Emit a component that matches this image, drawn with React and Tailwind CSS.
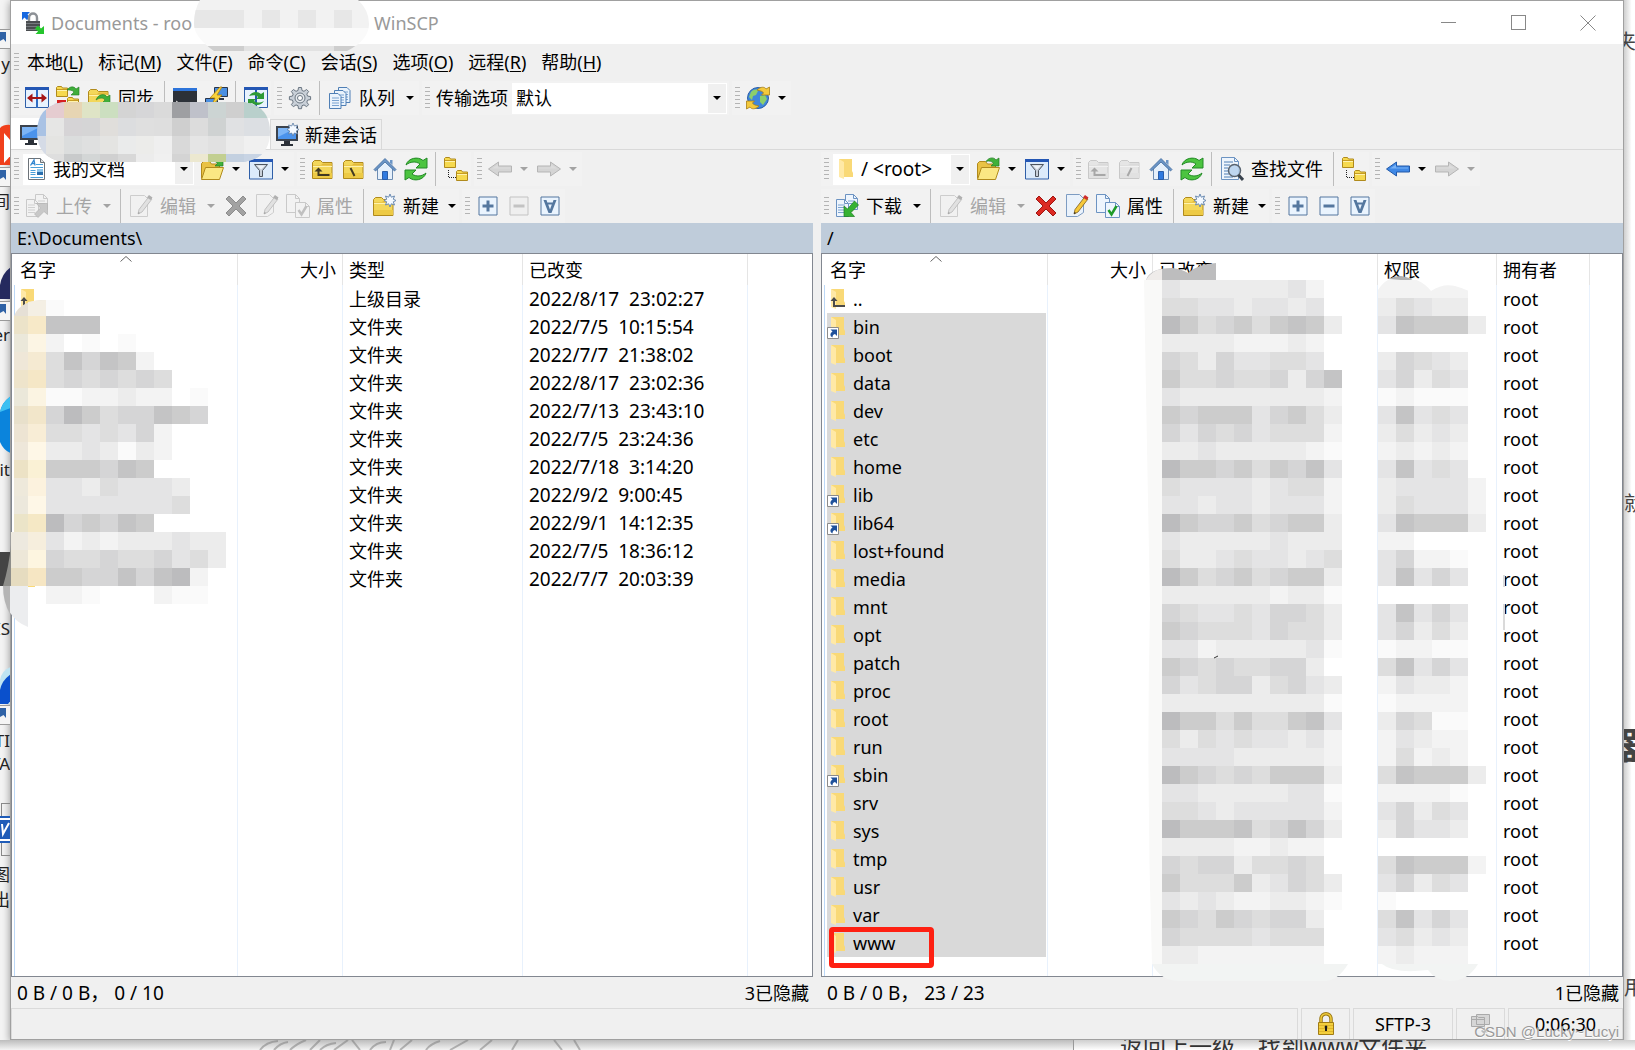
import { useState } from 'react';

const MENUS = [
    ['本地', 'L'], ['标记', 'M'], ['文件', 'F'], ['命令', 'C'],
    ['会话', 'S'], ['选项', 'O'], ['远程', 'R'], ['帮助', 'H']
];

const LOCAL_ROWS = [
    ['上级目录', '2022/8/17  23:02:27'],
    ['文件夹', '2022/7/5  10:15:54'],
    ['文件夹', '2022/7/7  21:38:02'],
    ['文件夹', '2022/8/17  23:02:36'],
    ['文件夹', '2022/7/13  23:43:10'],
    ['文件夹', '2022/7/5  23:24:36'],
    ['文件夹', '2022/7/18  3:14:20'],
    ['文件夹', '2022/9/2  9:00:45'],
    ['文件夹', '2022/9/1  14:12:35'],
    ['文件夹', '2022/7/5  18:36:12'],
    ['文件夹', '2022/7/7  20:03:39']
];

const REMOTE_ROWS = [
    '..', 'bin', 'boot', 'data', 'dev', 'etc', 'home', 'lib', 'lib64', 'lost+found', 'media', 'mnt',
    'opt', 'patch', 'proc', 'root', 'run', 'sbin', 'srv', 'sys', 'tmp', 'usr', 'var', 'www'
];
const LINKS = ['bin', 'lib', 'lib64', 'sbin'];

// one character per mosaic block, 0 = nothing, 9 = darkest
const SHADES = ['none', '#fafafa', '#f3f3f3', '#ececec', '#e4e4e5', '#dddddd', '#d5d5d6', '#cccccc', '#c4c4c5', '#bcbcbe'];

const MASK_LOCAL = [
    '888', '20101', '586872', '5656565', '112232201', '697566876', '5545462', '3343132', '777687',
    '44354443', '44444445', '967687', '4232333433', '6556556453', '776686892', '2210002110'
];
const MASK_DATE = [
    '4333333420', '5544344340', '9756757873', '3333222320', '6536445540', '7556556368', '4333333332',
    '7677746753', '6465645552', '3343333321', '9776757684', '5444434552', '4434434442', '9766756773',
    '4333334333', '5334544345', '9756756773', '3333332331', '6544546653', '7655546553', '4423333341',
    '7656556630', '6456635643', '3333333331', '9775755784', '5354544342', '4444333332', '9765657773',
    '4433333441', '5543444442', '9777856863', '3333223220', '6566355650', '7555734653', '4343223321',
    '7657656630', '6555545550', '3322222220'
];
const MASK_RIGHTS = [
    '222220', '354330', '487773', '', '36543', '46354', '12111', '48454', '35343', '23232', '48454',
    '344442', '354442', '487773', '22', '46221', '48464', '', '48464', '46353', '12211', '58464',
    '24332', '12222', '36511', '24322', '25232', '587773', '22221', '46354', '36443', '', '587772',
    '46354', '1', '58464', '45343', '23222'
];
const FOLDER_TINTS = [
    ['#ece3c9', '#f7e9c8'], ['#ebe8da', '#fcf5e4'], ['#efe7d8', '#f5ead2'], ['#eee4cb', '#f5e7c6'],
    ['#ebe8da', '#fbf4e2'], ['#e8e0cb', '#f2e6ca'], ['#ede4d3', '#f8edd6'], ['#eee7da', '#fef7e7'],
    ['#ece2c5', '#faf1d5'], ['#eee9db', '#fcf2de'], ['#ece8dc', '#fef7e7'], ['#ebe4c8', '#f5e8c5'],
    ['#ede9df', '#f6eedd'], ['#ede7d8', '#fdf5e0'], ['#e6dcc0', '#f6e6c3']
];
const MASK_SESSION = [
    ['#a9c2e4', '#e5ccd0', '#e7d5b3', '#dfe4c6', '#ccdfc0', '#d4d4d4', '#d6d6d8', '#dadada', '#9e9fa2', '#bfc1ca', '#ccd4d3', '#cfcfcf', '#b9d0cc'],
    ['#a9c2e4', '#e6e6e5', '#d6d4d6', '#d5d5d6', '#e0dedb', '#dcdddf', '#dfdfdf', '#dedede', '#cfcfcf', '#dcdcdc', '#cfd2d2', '#e0e1e3', '#dcdfe3'],
    ['#d5dbe6', '#e4e4e2', '#dbdddd', '#dfe0e0', '#e4e4e2', '#eaebeb', '#ececea', '#efefef', '#d9d9d9', '#e5e5e5', '#e1e1e1', '#ebebeb', '#f0f0f0'],
    ['#c9c7c8', '#dedede', '#c8cacb', '#d3d6d6', '#d0d0d0', '#d8d8d8', '#ececec', '#f0f0f0', '#d4d4d4', '#ece8d0', '#c2cf91', '#c3d0e0', '#c8d4e4']
];

/* ---------- icons ---------- */

const Svg = ({ children, gray }) => (
    <svg width="24" height="24" viewBox="0 0 24 24" aria-hidden="true" className={gray ? 'shrink-0 grayscale opacity-40' : 'shrink-0'}>{children}</svg>
);

const SmallFolder = ({ x = 0, y = 0 }) => (
    <g transform={`translate(${x} ${y})`}>
        <path d="M.5 10.5v-9l1-1h4l1 1.5h5v8.5z" fill="#f6d94f" stroke="#b08a1c" />
        <path d="M1 4.5h10" stroke="#fff3ae" />
        <path d="M1 3.5h10" stroke="#c79c22" />
    </g>
);

const FolderShape = () => (
    <>
        <path d="M1.5 21.500v-16l2-2h6l2 2h9.500v16z" fill="#f3d75a" stroke="#b08a1c" />
        <path d="M2 8.500h19v-2h-9l-2 1.500H2z" fill="#e2b83a" />
        <path d="M2 9.500h19" stroke="#fff2ac" />
        <path d="M2 16h19v5H2z" fill="#edca45" />
    </>
);

const FolderUpIcon = ({ gray }) => (
    <Svg gray={gray}><FolderShape /><path d="M7.500 10.500l-4 4h3v4.500h12v-2h-10v-2.500h3z" fill="#413a22" /></Svg>
);

const FolderRootIcon = ({ gray, flip }) => (
    <Svg gray={gray}><FolderShape /><path d={flip ? 'M13.500 11l-4 8' : 'M8.500 11l4 8'} stroke="#413a22" strokeWidth="2" /></Svg>
);

const FolderOpenIcon = () => (
    <Svg>
        <path d="M1.500 21.500v-15l2-2h6l2 2.500h8v4" fill="#e9c244" stroke="#b08a1c" />
        <path d="M1.500 22.500l4-12h18l-4 12z" fill="#fae783" stroke="#b08a1c" />
        <path d="M10 4.500C13 0 18 0 20 3l3-2v8h-8l2.500-2.500C16 4 13 3.500 10 4.500z" fill="#3fb13a" stroke="#237d24" strokeWidth=".7" />
    </Svg>
);

const NewFolderIcon = () => (
    <Svg>
        <FolderShape />
        <path d="M18 0l1.300 3.200 3.200-1.200-1.200 3.200L24 6.500l-2.700 1.300 1.200 3.200-3.200-1.200L18 13l-1.300-3.200-3.200 1.200 1.200-3.200L12 6.500l2.700-1.300L13.500 2l3.200 1.200z" fill="#f4f9ff" stroke="#6b8bb3" />
    </Svg>
);

const FilterIcon = () => (
    <Svg>
        <path d="M.5 3h23v19H.5z" fill="#dcebfb" stroke="#2f5fa8" />
        <path d="M0 2h24v3H0z" fill="#2457b4" />
        <path d="M5.500 7.500h13l-5 6v6h-3v-6z" fill="#c8d0da" stroke="#4d555f" />
        <path d="M8 8.500h8l-4 4z" fill="#eef3f8" />
    </Svg>
);

const HomeIcon = () => (
    <Svg>
        <path d="M4.500 11v11.500h15V11L12 4z" fill="#e6f0fb" stroke="#6d8cb2" />
        <path d="M1 12.500L12 1.500l11 11-1.500 1.500L12 5l-9.500 9z" fill="#6b95c6" stroke="#3f6a9c" strokeWidth=".8" />
        <path d="M9.500 22.500v-8h5v8z" fill="#2f7ae0" stroke="#2a5eaa" />
        <path d="M17 3h2.500v5L17 5.500z" fill="#6b95c6" />
    </Svg>
);

const RefreshIcon = () => (
    <Svg>
        <path d="M2 8C4 1 14-1 19 3.500L23 1v10H12l4-4C12 4 6 4.500 2 8z" fill="#4cc440" stroke="#238a26" />
        <path d="M22 16c-2 7-12 9-17 4.500L1 23V13h11l-4 4c4 3 10 2.500 14-1z" fill="#4cc440" stroke="#238a26" />
    </Svg>
);

const TreeIcon = () => (
    <Svg>
        <SmallFolder x={0} y={0} />
        <SmallFolder x={12} y={13} />
        <path d="M4.500 13v7.500H12" fill="none" stroke="#222" strokeDasharray="1 1" />
    </Svg>
);

const ArrowIcon = ({ gray, right }) => (
    <Svg>
        <g transform={right ? 'matrix(-1 0 0 1 24 0)' : undefined}>
            <path d="M.500 12l10-7v4h13v6h-13v4z" fill={gray ? '#d4d4d4' : '#3f88e6'} stroke={gray ? '#b5b5b5' : '#2259a8'} />
            <path d="M4 11.500l6-4v3h12v1z" fill={gray ? '#dcdcdc' : '#79b2f5'} />
        </g>
    </Svg>
);

const CompareIcon = () => (
    <Svg>
        <path d="M.500 1.500h23v20H.500z" fill="#e8f2fd" stroke="#2f5fa8" />
        <path d="M0 1h24v3H0z" fill="#2457b4" />
        <path d="M11 4h2v18h-2z" fill="#2f6cc4" />
        <path d="M2 12l5.500-4.500V11h9V7.500L22 12l-5.500 4.500V13h-9v3.500z" fill="#a51616" />
    </Svg>
);

const SyncFolderIcon = () => (
    <Svg>
        <SmallFolder x={0} y={0} />
        <path d="M1 14h9v9H1z" fill="#d61f1f" />
        <SmallFolder x={11} y={11} />
        <path d="M11 4c3-4 7-4 9-1l3-2v8h-8l3-3c-2-2-4-2-7-2z" fill="#3fae3a" stroke="#237d24" strokeWidth=".6" />
    </Svg>
);

const FolderSyncIcon = () => (
    <Svg>
        <FolderShape />
        <path d="M9 14c2-6 9-7 11-3l3-2v8h-8l3-3c-2-3-6-2-9 0z" fill="#3fae3a" stroke="#237d24" strokeWidth=".6" />
    </Svg>
);

const TerminalIcon = () => (
    <Svg>
        <path d="M0 2h24v20H0z" fill="#2c3138" />
        <path d="M0 2h24v3H0z" fill="#2d74da" />
        <path d="M3 15l3 2-3 2M8 19h4" stroke="#e5e5e5" fill="none" />
    </Svg>
);

const PuttyIcon = () => (
    <Svg>
        <path d="M10.500 1.500h13v9h-13zM1.500 12.500h12v8h-12z" fill="#4a8fe2" stroke="#29354a" />
        <path d="M15 12h5v2h-5z" fill="#29354a" />
        <path d="M16 1L6 12h5l-4 9 11-12h-5l5-8z" fill="#f8d23c" stroke="#ae8411" strokeWidth=".8" />
    </Svg>
);

const SyncBrowseIcon = () => (
    <Svg>
        <path d="M.500 1.500h23v20H.500z" fill="#e8f2fd" stroke="#2f5fa8" />
        <path d="M0 1h24v3H0zM11 4h2v18h-2z" fill="#2457b4" />
        <path d="M5 10c3-5 9-5 12-2l3-2v7h-8l2-2c-2-2-5-2-9-1zM20 15c-3 5-9 5-12 2l-4 2v-6h8l-2 2c3 2 6 2 10 0z" fill="#2d9a35" />
    </Svg>
);

const GearIcon = () => (
    <Svg>
        <g fill="#c9d0d8" stroke="#6b7682">
            <path d="M10.500 1.500h3l.5 3 2 .8 2.600-1.800 2 2-1.800 2.600.8 2 3 .5v3l-3 .5-.8 2 1.800 2.600-2 2-2.600-1.800-2 .8-.5 3h-3l-.5-3-2-.8-2.600 1.800-2-2 1.800-2.600-.8-2-3-.5v-3l3-.5.8-2-1.800-2.600 2-2L8 5.300l2-.8z" />
            <circle cx="12" cy="12" r="5" fill="#e4e8ec" />
            <circle cx="12" cy="12" r="2.500" fill="#fff" />
        </g>
    </Svg>
);

const QueueIcon = () => (
    <Svg>
        {[[10, 1], [6, 4], [1, 7]].map(([x, y]) => (
            <g key={x} transform={`translate(${x} ${y})`}>
                <path d="M.5.5h8.500l3 3v12H.5z" fill="#eaf3fc" stroke="#4f7fb5" />
                <path d="M3 5h7M3 7.500h7M3 10h7M3 12.500h7" stroke="#7ba3d0" />
            </g>
        ))}
    </Svg>
);

const GlobeIcon = () => (
    <Svg>
        <circle cx="12" cy="12" r="10.500" fill="#3f86dc" stroke="#2a5ea8" />
        <path d="M5 6c3-3 6-3 7-1l-2 4-3 1-1 4-3-3zM14 10l5-1 2 4-4 6-3-3z" fill="#8ccf6b" />
        <path d="M11 4c4-4 8-3 9-1l3.500-2v8h-8l2-2c-1-2-3-2-6.500-3zM13 20c-4 4-8 3-9 1L.5 23v-8h8l-2 2c1 2 3 2 6.500 3z" fill="#f4c93c" stroke="#a87f12" strokeWidth=".8" />
    </Svg>
);

const MonitorIcon = ({ star }) => (
    <Svg>
        <path d="M1 3h22v15H1z" fill="#3c434d" />
        <path d="M3 5h18v11H3z" fill="#4b93ec" />
        <path d="M3 5h18L3 14z" fill="#7db5f6" />
        <path d="M9 18h6v3h3v2H6v-2h3z" fill="#2b3038" />
        {star && <path d="M18 0l1.300 3 3.200-1-1.200 3 2.700 1.500-2.700 1.500 1.200 3-3.200-1L18 13l-1.300-3-3.200 1 1.200-3L12 6.500 14.700 5l-1.200-3 3.200 1z" fill="#f4f9ff" stroke="#5b7ba3" strokeWidth=".8" />}
    </Svg>
);

const DocIcon = () => (
    <Svg>
        <path d="M3.500 1.500h12l4 4v17h-16z" fill="#fff" stroke="#6c7278" />
        <path d="M15.500 1.500v4h4" fill="#ddd" stroke="#6c7278" />
        <path d="M5.500 8.500L9 3l1 5.500M7 6.500h3" stroke="#2f86d0" strokeWidth="1.300" fill="none" />
        <path d="M11 7.500h7M5.500 10.500h12.500M5.500 13.500h5M5.500 15.500h5M5.500 17.500h5M5.500 20.500h12.500" stroke="#4a9fd8" />
        <path d="M12 12h6v6h-6z" fill="#8cc4ea" />
        <path d="M12 15h6v3h-6z" fill="#2b6fae" />
    </Svg>
);

const Page = ({ x = 0, y = 0, w = 12, h = 15 }) => (
    <g transform={`translate(${x} ${y})`}>
        <path d={`M.5.5h${w - 4}l4 4v${h - 4}h-${w}z`} fill="#eef5fd" stroke="#6c93c2" />
        <path d={`M${w - 3.500}.5v4h4`} fill="none" stroke="#6c93c2" />
    </g>
);

const TransferIcon = ({ gray, up }) => (
    <Svg gray={gray}>
        <Page x={10} y={0} />
        <Page x={1} y={5} h={17} />
        <path d="M3 11h7M3 13.500h7M3 16h7M3 18.500h7M13 7h7M13 9.500h7" stroke="#7ba3d0" />
        {up
            ? <path d="M22.500 9.500v11l-3.500-3-6 6-3.500-3.500 6-6-4-4.500z" fill="#8a8a8a" stroke="#555" strokeWidth=".7" />
            : <path d="M9 12l3.500 3 7-8 4 4-7.500 7.500 3.500 4H9z" fill="#35b233" stroke="#1c7d20" strokeWidth=".7" />}
    </Svg>
);

const EditIcon = ({ gray, plain }) => (
    <Svg gray={gray}>
        <path d={plain ? 'M1.500.500h13l4 4v14l-6 4h-11z' : 'M1.500 1.500h14l3 3v18h-17z'} fill="#eaf2fb" stroke="#7d9cc2" />
        <path d="M20 2.500l3 2.500-10 13-4 2 1-4.500z" fill="#f6c83a" stroke="#7c5c1c" strokeWidth=".8" />
        <path d="M20 1l3.500 2.500-2 2.500L18 3.500z" fill="#cf2b2b" />
        <path d="M9 20l.5-2 1.500 1z" fill="#222" />
    </Svg>
);

const PropsIcon = ({ gray }) => (
    <Svg gray={gray}>
        <Page x={0} y={0} w={13} h={18} />
        <Page x={9} y={8} w={14} h={15} />
        <path d="M12.500 16l3 4.500 5-8.500" fill="none" stroke="#1e9b28" strokeWidth="2.500" />
    </Svg>
);

const DeleteIcon = ({ gray }) => (
    <Svg>
        <path d="M5 2l7 7 7-7 3 3-7 7 7 7-3 3-7-7-7 7-3-3 7-7-7-7z" fill={gray ? '#a2a2a2' : '#dc2a22'} stroke={gray ? '#8c8c8c' : '#9f1410'} strokeLinejoin="round" />
    </Svg>
);

const FindIcon = () => (
    <Svg>
        <Page x={1} y={0} w={17} h={22} />
        <path d="M4 5h9M4 8h6M4 11h4M4 14h4M4 17h5M4 20h9" stroke="#4f7fb5" />
        <circle cx="14.500" cy="13.500" r="6" fill="#b8d3ee" fillOpacity=".9" stroke="#59636f" strokeWidth="1.500" />
        <path d="M18.500 18l4.500 5" stroke="#39424d" strokeWidth="3" />
    </Svg>
);

const MARKS = {
    plus: 'M10.500 6.500h3v4h4v3h-4v4h-3v-4h-4v-3h4z',
    minus: 'M6.500 10.500h11v3h-11z',
    invert: 'M5.500 6h3l.8 2.500h5.400l.8-2.500h3L13.500 19h-3zM10.200 10.500l1.800 5 1.800-5z'
};

const MarkIcon = ({ kind, gray }) => (
    <Svg>
        <path d="M3 3h18v18H3z" fill={gray ? '#efefef' : '#eaf4fe'} stroke={gray ? '#c3c3c3' : '#54779f'} />
        <path d={MARKS[kind]} fillRule="evenodd" fill={gray ? '#c3c3c3' : '#54779f'} />
    </Svg>
);

const AppIcon = () => (
    <svg width="24" height="24" viewBox="0 0 24 24" aria-hidden="true">
        <path d="M1 1h8L6.500 3.500 9 6 6 9 3.500 6.500 1 9z" fill="#1668e0" />
        <path d="M8 11V7c0-6 8-6 8 0v4" fill="none" stroke="#8d9196" strokeWidth="2.400" />
        <path d="M5 10h14v10H5z" fill="#4a4d50" />
        <path d="M5 12.500h14M5 15.500h14M5 18.500h14" stroke="#777b80" />
        <path d="M23 23h-8.500l2.500-2.500-3-3 3-3 3 3 3-2.500z" fill="#25c52d" />
    </svg>
);

const Caret = ({ gray }) => (
    <svg width="8" height="4" viewBox="0 0 8 4" aria-hidden="true"><path d="M0 0h8L4 4z" fill={gray ? '#a3a3a3' : '#000'} /></svg>
);

const FileIcon = ({ up, link }) => (
    <svg width="18" height="28" viewBox="0 0 18 28" aria-hidden="true" className="shrink-0">
        <path d="M4 4h13v12l1 2v4H8z" fill="#f9d977" />
        <path d="M4 4l5 3v17l-5-2z" fill="#ffe9a6" />
        {up && <path d="M7 12l-3.500 4H6v6h12v-2H8v-4h2.500z" fill="#4b4b4b" />}
        {link && (
            <>
                <path d="M.5 14.500h11v11H.5z" fill="#fff" stroke="#8b8b8b" />
                <path d="M3.500 16.500h6.500v6.500l-2-2c-2 .5-2.500 1.500-2.500 3.500-3-1.500-2.500-4.500 0-6z" fill="#1f519b" />
            </>
        )}
    </svg>
);

const LockIcon = () => (
    <svg width="18" height="24" viewBox="0 0 18 24" aria-hidden="true">
        <path d="M4 11V7c0-7 10-7 10 0v4" fill="none" stroke="#9c7a16" strokeWidth="3.500" />
        <path d="M4 11V7c0-7 10-7 10 0v4" fill="none" stroke="#f1cd3c" strokeWidth="1.500" />
        <path d="M1.500 10.500h15v12h-15z" fill="#f3cf3d" stroke="#a17c15" />
        <path d="M2 13.500h14M2 16.500h14M2 19.500h14" stroke="#e0b52c" />
        <path d="M9 13.500a1.500 1.500 0 0 1 1 2.500v3H8v-3a1.500 1.500 0 0 1 1-2.500z" fill="#1b1b1b" />
    </svg>
);

/* ---------- toolbar parts ---------- */

const Grip = ({ short }) => (
    <span className={`ml-[3px] mr-[2px] w-[5px] shrink-0 bg-[repeating-linear-gradient(to_bottom,#b4b4b4_0_1px,transparent_1px_4px)] ${short ? 'h-[17px]' : 'h-[22px]'}`} />
);

const Band = ({ children, short }) => (
    <div className="mr-[3px] flex h-[34px] shrink-0 items-center bg-[#f2f2f2]">
        <Grip short={short} />
        {children}
    </div>
);

const Sep = () => <span className="mx-1 h-[34px] w-px shrink-0 bg-[#bdbdbd]" />;

const Tool = ({ icon, label, title, gray }) => (
    <button type="button" disabled={gray} title={title || label} aria-label={title || label} className={`flex h-[30px] shrink-0 items-center ${gray ? 'text-[#a5a5a5]' : 'text-black'}`}>
        <span className="flex w-[31px] justify-center">{icon}</span>
        {label && <span className="pl-1 pr-1.5">{label}</span>}
    </button>
);

const Drop = ({ gray, title, tight }) => (
    <button type="button" disabled={gray} aria-label={title} className={`flex h-[30px] shrink-0 items-center justify-center ${tight ? 'w-[14px]' : 'w-[18px]'}`}>
        <Caret gray={gray} />
    </button>
);

const Combo = ({ icon, value, label, className }) => (
    <div className={`flex h-[31px] shrink-0 items-center bg-white ${className}`}>
        {icon}
        <select aria-label={label} className="min-w-0 flex-1 appearance-none bg-transparent pl-1 outline-none">
            <option>{value}</option>
        </select>
        <span className="mr-px flex h-[29px] w-[18px] shrink-0 items-center justify-center bg-[#f0f0f0]"><Caret /></span>
    </div>
);

const PanelTools = ({ remote }) => (
    <>
        <div className="flex h-[38px] items-center overflow-hidden">
            <Band>
                <Combo
                    label={remote ? '远程目录' : '本地目录'}
                    value={remote ? '/ <root>' : '我的文档'}
                    icon={remote ? <span className="ml-0.5 mr-1"><FileIcon /></span> : <span className="ml-0.5"><DocIcon /></span>}
                    className={remote ? 'mx-0.5 w-[137px] text-[19px]' : 'mx-0.5 w-[171px]'}
                />
                <Tool icon={<FolderOpenIcon />} title="打开目录" /><Drop title="打开目录选项" />
                <Tool icon={<FilterIcon />} title="过滤" /><Drop title="过滤选项" />
            </Band>
            <Band>
                <Tool icon={<FolderUpIcon gray={remote} />} title="上级目录" gray={remote} />
                <Tool icon={<FolderRootIcon gray={remote} flip={remote} />} title="根目录" gray={remote} />
                <Tool icon={<HomeIcon />} title="主目录" />
                <Tool icon={<RefreshIcon />} title="刷新" />
                <Sep />
                {remote && <><Tool icon={<FindIcon />} label="查找文件" /><Sep /></>}
                <Tool icon={<TreeIcon />} title="目录树" />
            </Band>
            <Band>
                <Tool icon={<ArrowIcon gray={!remote} />} title="后退" gray={!remote} /><Drop gray={!remote} title="后退选项" />
                <Tool icon={<ArrowIcon gray right />} title="前进" gray /><Drop gray title="前进选项" />
            </Band>
        </div>
        <div className="flex h-[35px] items-center overflow-hidden">
            <Band short>
                <Tool icon={<TransferIcon gray={!remote} up={!remote} />} label={remote ? '下载' : '上传'} gray={!remote} />
                <Drop gray={!remote} title="传输选项" />
                <Sep />
                <Tool icon={<EditIcon gray />} label="编辑" gray /><Drop gray title="编辑选项" />
                <Tool icon={<DeleteIcon gray={!remote} />} title="删除" gray={!remote} />
                <Tool icon={<EditIcon gray={!remote} plain />} title="重命名" gray={!remote} />
                <Tool icon={<PropsIcon gray={!remote} />} label="属性" gray={!remote} />
                <Sep />
                <Tool icon={<NewFolderIcon />} label="新建" /><Drop tight title="新建选项" />
            </Band>
            <Band short>
                <Tool icon={<MarkIcon kind="plus" />} title="选择" />
                <Tool icon={<MarkIcon kind="minus" gray={!remote} />} title="取消选择" gray={!remote} />
                <Tool icon={<MarkIcon kind="invert" />} title="反选" />
            </Band>
        </div>
    </>
);

/* ---------- file lists ---------- */

const HEAD = 'relative border-r border-[#e5e5e5] px-1.5 font-normal whitespace-nowrap text-left';
const CELL = 'border-r border-[#e8f1fc] px-1.5 py-0 whitespace-pre';
const FIRST = 'border-l border-l-[#bcd8f7] border-r border-r-[#e8f1fc] p-0';

const SortMark = () => (
    <svg width="12" height="6" viewBox="0 0 12 6" aria-hidden="true" className="absolute left-1/2 top-0.5 -translate-x-1/2">
        <path d="M.500 5.500L6 .500l5.500 5" fill="none" stroke="#666" />
    </svg>
);

const FileTable = ({ heads, widths, children }) => (
    <div className="min-h-0 flex-1 border border-[#828790] bg-white pl-0.5">
        <table className="h-full w-full table-fixed border-separate border-spacing-0">
            <colgroup>
                {widths.map((w, i) => <col key={i} style={{ width: w }} />)}
                <col />
            </colgroup>
            <thead>
                <tr className="h-[31px]">
                    {heads.map((h, i) => (
                        <th key={h} scope="col" className={`${HEAD} ${h === '大小' ? 'text-right' : ''}`}>
                            {h}
                            {i === 0 && <SortMark />}
                        </th>
                    ))}
                    <td />
                </tr>
            </thead>
            <tbody>
                {children}
                <tr>
                    {heads.map((h, i) => <td key={h} className={i === 0 ? FIRST : CELL} />)}
                    <td />
                </tr>
            </tbody>
        </table>
    </div>
);

const PanelStatus = ({ count, hidden }) => (
    <div className="flex h-[31px] shrink-0 items-center justify-between pl-1.5 pr-1">
        <span className="whitespace-pre text-[19px]">{count}</span>
        <span>{hidden}</span>
    </div>
);

const LocalPanel = () => (
    <section className="flex min-w-0 flex-1 flex-col">
        <PanelTools />
        <div className="flex h-[30px] shrink-0 items-center bg-[#bfccda] px-1.5">E:\Documents\</div>
        <FileTable heads={['名字', '大小', '类型', '已改变']} widths={[224, 105, 180, 225]}>
            {LOCAL_ROWS.map(([type, date], i) => (
                <tr key={i} className="h-7">
                    <td className={FIRST}><div className="flex h-7 pl-0.5"><FileIcon up={i === 0} /></div></td>
                    <td className={CELL} />
                    <td className={CELL}>{type}</td>
                    <td className={`${CELL} text-[19px]`}>{date}</td>
                    <td />
                </tr>
            ))}
        </FileTable>
        <PanelStatus count="0 B / 0 B， 0 / 10" hidden="3已隐藏" />
    </section>
);

const RemotePanel = () => {
    const [marked] = useState(() => REMOTE_ROWS.slice(1));

    return (
        <section className="flex min-w-0 flex-1 flex-col">
            <PanelTools remote />
            <div className="flex h-[30px] shrink-0 items-center bg-[#bfccda] px-1.5">/</div>
            <FileTable heads={['名字', '大小', '已改变', '权限', '拥有者']} widths={[224, 105, 225, 119, 93]}>
                {REMOTE_ROWS.map((name) => (
                    <tr key={name} className="h-7">
                        <td className={FIRST}>
                            <div className={`relative ml-0.5 mr-px flex h-7 items-center gap-2 ${marked.includes(name) ? 'bg-[#d9d9d9]' : ''}`}>
                                <FileIcon up={name === '..'} link={LINKS.includes(name)} />
                                {name}
                                {name === 'www' && <span className="absolute left-0.5 top-[-2px] h-[41px] w-[105px] rounded-[4px] border-[5px] border-[#fe2012]" />}
                            </div>
                        </td>
                        <td className={CELL} />
                        <td className={CELL} />
                        <td className={CELL} />
                        <td className={CELL}>root</td>
                        <td />
                    </tr>
                ))}
            </FileTable>
            <PanelStatus count="0 B / 0 B， 23 / 23" hidden="1已隐藏" />
        </section>
    );
};

/* ---------- privacy mosaic drawn over the window ---------- */

const Blocks = ({ x, y, rows }) => rows.map((row, r) => [...row].map((c, i) => (
    c === '0' ? null : <rect key={`${r}-${i}`} x={x + i * 18} y={y + r * 18} width="18" height="18" fill={SHADES[c]} />
)));

const Mosaic = () => (
    <svg width="1635" height="1050" viewBox="0 0 1635 1050" aria-hidden="true" className="pointer-events-none absolute left-0 top-0">
        <defs>
            <clipPath id="pill"><path d="M64 102h180q26 4 26 30t-26 30H64q-27-4-27-30t27-30z" /></clipPath>
            <clipPath id="cap"><path d="M200 0h158q11 10 11 24 0 16-22 27H214q-20-14-20-27 0-14 6-24z" /></clipPath>
            <clipPath id="rights"><path d="M1378 290q8-13 22-13 20 0 31 14 12-8 24-5 15 4 31 14v700h-108z" /></clipPath>
        </defs>
        <g clipPath="url(#cap)">
            <path d="M190 0h190v28H190z" fill="#f2f2f2" />
            <path d="M190 28h190v18H190z" fill="#fafafa" />
            <path d="M194 10h50v18h-50zM262 10h18v18h-18zM298 10h18v18h-18zM334 10h18v18h-18z" fill="#e7e7e7" />
            <path d="M190 46h54v6h-54zM334 46h30v6h-30z" fill="#cecece" />
            <path d="M244 46h90v6h-90z" fill="#e2e2e2" />
        </g>
        <g clipPath="url(#pill)">
            {MASK_SESSION.map((row, r) => row.map((fill, i) => (
                <rect key={`${r}-${i}`} x={28 + i * 18} y={100 + r * 18} width="36" height="18" fill={fill} />
            )))}
        </g>

        <path d="M14 316q6-16 32-16v16z" fill="#e6e0d6" />
        <path d="M28 302q8-2 18-2v16H28z" fill="#f4efe4" />
        <path d="M46 300h18v16H46z" fill="#fafafa" />
        {FOLDER_TINTS.map(([a, b], i) => (
            <g key={i}>
                <rect x={i < 12 ? 14 : 11} y={316 + i * 18} width="18" height="18" fill={a} />
                <rect x="28" y={316 + i * 18} width="18" height="18" fill={b} />
            </g>
        ))}
        <path d="M11 545v41H3q6-20 8-41z" fill="#8e8e8a" />
        <path d="M3 586h25v41Q4 618 3 586z" fill="#ecedef" />
        <path d="M3 586h7v28q-7-12-7-28z" fill="#b5b5b5" />
        <Blocks x={46} y={316} rows={MASK_LOCAL} />

        <path d="M1146 280q4-12 26-12 10 1 16 5 10-9 28-10v17z" fill="#bdbdbe" />
        <path d="M1146 280q6-10 16-11v11z" fill="#efecea" />
        <path d="M1144 280h18v684h-10q-6-180-2-360-2-100-6-324z" fill="#f9f9f8" />
        <Blocks x={1162} y={280} rows={MASK_DATE} />
        <path d="M1152 964h196q-10 17-24 17h-145q-18 0-27-17z" fill="#f2f4f3" />
        <path d="M1214 658l4-2" stroke="#333" />

        <path d="M1388 279q6-3 13-3 8 1 13 5z" fill="#b0b0b0" />
        <g clipPath="url(#rights)"><Blocks x={1378} y={280} rows={MASK_RIGHTS} /></g>
        <path d="M1382 964h96q-10 17-28 17-14 0-22-11-34 4-46-6z" fill="#f2f4f3" />
        <path d="M1504 575v12M1504 604v26" stroke="#dadada" strokeWidth="2" />
    </svg>
);

/* ---------- desktop showing around the window ---------- */

const DESK_TEXT = [
    ['top-[52px]', 'y'], ['top-[190px]', '间'], ['top-[323px]', 'er'], ['top-[458px]', 'it'],
    ['top-[617px]', 'IS'], ['top-[729px]', 'TI'], ['top-[752px]', 'TA'], ['top-[863px]', '图'], ['top-[888px]', '出']
];

const DesktopLeft = () => (
    <div className="relative w-[10px] shrink-0 overflow-hidden text-[17px] leading-6 text-[#222]">
        <svg width="11" height="1050" viewBox="0 0 11 1050" aria-hidden="true" className="absolute left-0 top-0">
            <path d="M11 125Q4 124 0 128v37h11z" fill="#f0401c" />
            <path d="M4 133l7 8v14l-7 8z" fill="#fff" />
            <path d="M11 267Q2 273 0 285v14h11z" fill="#252a5e" />
            <path d="M11 396Q2 402 0 412v30q4 9 11 11z" fill="#0b84dc" />
            <path d="M11 396Q2 402 0 412l11-4z" fill="#3cc0f2" />
            <path d="M11 552H0v34h9z" fill="#444" />
            <path d="M11 667Q2 670 0 680v24h11z" fill="#bfe4f2" />
            <path d="M11 674Q2 680 0 690v14h8l3-4z" fill="#0a50cc" />
            <path d="M1.500 803.500H12M1.500 855.500H12M1.500 803v13M1.500 843v13" stroke="#888" />
            <path d="M0 816h11v27H0z" fill="#1f5cb8" />
            <path d="M0 819h11M0 840h11" stroke="#fff" strokeWidth="2" />
            <path d="M2 824l1 10 6-11" fill="none" stroke="#fff" strokeWidth="2" />
            {[29, 167, 301, 705].map((y) => (
                <g key={y}>
                    <path d={`M-1 ${y + 0.500}h12v19H-1z`} fill="#f4f4f4" stroke="#9a9a9a" />
                    <path d={`M0 ${y + 3}h6v10l-2.500-3L0 ${y + 12}z`} fill="#2f62a6" />
                </g>
            ))}
        </svg>
        {DESK_TEXT.map(([top, t]) => <span key={top} className={`absolute right-0 ${top}`}>{t}</span>)}
    </div>
);

const DesktopRight = () => (
    <div className="relative w-[11px] shrink-0 overflow-hidden bg-gradient-to-r from-[#cfcfcf] to-white to-70% text-[#444]">
        <span className="absolute left-[-8px] top-[30px] text-[20px]">夹</span>
        <span className="absolute left-0 top-[492px] text-[20px]">就</span>
        <span className="absolute left-[-20px] top-[734px] text-[36px] font-bold">器</span>
        <span className="absolute left-0 top-[976px] text-[20px]">用</span>
    </div>
);

export default function App() {
    return (
        <div className="relative flex h-screen flex-col overflow-hidden bg-[#f4f4f4] font-['Noto_Sans','Noto_Sans_CJK_SC',sans-serif] text-[18px] leading-6 text-black">
            <div className="flex min-h-0 flex-1">
                <DesktopLeft />
                <main className="flex min-w-0 flex-1 flex-col border border-[#a0a0a0] bg-[#f0f0f0] shadow-[0_2px_8px_rgba(0,0,0,0.4)]">
                    <header className="flex h-[43px] shrink-0 items-center bg-white text-[#999]">
                        <div className="flex items-center gap-1.5 pl-2.5">
                            <AppIcon />
                            <h1 className="w-[317px]">Documents - roo</h1>
                            <span>WinSCP</span>
                        </div>
                        <div className="ml-auto flex">
                            <button type="button" aria-label="最小化" className="flex h-[43px] w-[70px] items-center justify-center"><span className="h-px w-[15px] bg-[#888]" /></button>
                            <button type="button" aria-label="最大化" className="flex h-[43px] w-[70px] items-center justify-center"><span className="size-[15px] border border-[#888]" /></button>
                            <button type="button" aria-label="关闭" className="flex h-[43px] w-[70px] items-center justify-center">
                                <svg width="16" height="16" viewBox="0 0 16 16" aria-hidden="true"><path d="M.5.5l15 15M15.500.5l-15 15" stroke="#888" /></svg>
                            </button>
                        </div>
                    </header>

                    <nav className="flex h-[35px] shrink-0 items-center">
                        <Grip short />
                        <div className="flex gap-[15px] pl-1.5">
                            {MENUS.map(([name, key]) => (
                                <button key={key} type="button">{name}(<u className="underline-offset-2">{key}</u>)</button>
                            ))}
                        </div>
                    </nav>

                    <div className="flex h-[38px] shrink-0 items-center">
                        <Band>
                            <Tool icon={<CompareIcon />} title="比较目录" />
                            <Tool icon={<SyncFolderIcon />} title="同步目录" />
                            <Tool icon={<FolderSyncIcon />} label="同步" />
                            <Sep />
                            <Tool icon={<TerminalIcon />} title="终端" />
                            <Tool icon={<PuttyIcon />} title="PuTTY" />
                            <Sep />
                            <Tool icon={<SyncBrowseIcon />} title="同步浏览" />
                        </Band>
                        <Band>
                            <Tool icon={<GearIcon />} title="选项" />
                            <Sep />
                            <Tool icon={<QueueIcon />} label="队列" /><Drop title="队列选项" />
                        </Band>
                        <Band>
                            <span className="px-1">传输选项</span>
                            <Combo label="传输选项" value="默认" className="mr-0.5 w-[215px]" />
                        </Band>
                        <Band>
                            <Tool icon={<GlobeIcon />} title="同步服务" /><Drop title="同步服务选项" />
                        </Band>
                    </div>

                    <div className="flex h-[33px] shrink-0 items-end border-b border-[#d9d9d9]">
                        <button type="button" aria-label="会话" className="flex h-[31px] w-[259px] items-center bg-white pl-2"><MonitorIcon /></button>
                        <button type="button" className="flex h-[30px] items-center gap-1.5 border border-b-0 border-[#d9d9d9] pl-1 pr-1"><MonitorIcon star />新建会话</button>
                    </div>

                    <div className="flex min-h-0 flex-1 gap-2">
                        <LocalPanel />
                        <RemotePanel />
                    </div>

                    <footer className="flex h-[31px] shrink-0 gap-[3px] text-center">
                        <span className="flex-1 border border-b-0 border-[#dadada]" />
                        <span className="flex w-[49px] items-center justify-center border border-b-0 border-[#dadada]"><LockIcon /></span>
                        <span className="flex w-[100px] items-center justify-center border border-b-0 border-[#dadada]">SFTP-3</span>
                        <span className="flex w-[49px] items-center justify-center border border-b-0 border-[#dadada]">
                            <svg width="20" height="22" viewBox="0 0 20 22" aria-hidden="true">
                                <path d="M5.500 1.500h13v10h-13zM.500 3.500h6l1 1h6v9h-13z" fill="#d6d6d6" stroke="#aaa" />
                                <path d="M1 6.500h12" stroke="#aaa" />
                                <path d="M10 18l4-4v2.500h4v3h-4V22z" fill="#bbb" />
                            </svg>
                        </span>
                        <span className="flex w-[115px] items-center justify-center border border-b-0 border-[#dadada]">0:06:30</span>
                    </footer>
                </main>
                <DesktopRight />
            </div>

            <div className="flex h-[10px] shrink-0 overflow-hidden bg-[linear-gradient(to_bottom,#bdbdbd,#f4f4f4)]">
                <svg width="400" height="10" viewBox="0 0 400 10" aria-hidden="true" className="ml-[250px] shrink-0">
                    <path d="M10 10q6-8 18-9M24 10q6-7 14-8M40 10q6-6 16-10M60 10l10-10M70 10q6-6 16-7M84 10l14-10M110 10l-8-10M120 10q6-8 16-8M140 10l4-10M150 10l12-10M176 10q4-6 14-9M200 10l18-10M230 10l12-10M262 10l6-10M312 10l-8-10M330 10l-6-10" fill="none" stroke="#777" strokeWidth="2" opacity=".5" />
                </svg>
                <div className="ml-[423px] flex-1 overflow-hidden border-l border-[#999] bg-gradient-to-b from-[#cfcfcf] to-white">
                    <p className="-mt-2 pl-[46px] text-[23px] leading-7 text-[#333]">返回上一级，找到www文件夹</p>
                </div>
            </div>

            <Mosaic />
            <span className="absolute bottom-2 right-4 font-['Liberation_Sans',sans-serif] text-[15px] leading-5 text-[#999] [text-shadow:0_1px_0_#fff]">CSDN @Lucky~Lucyi</span>
        </div>
    );
}
